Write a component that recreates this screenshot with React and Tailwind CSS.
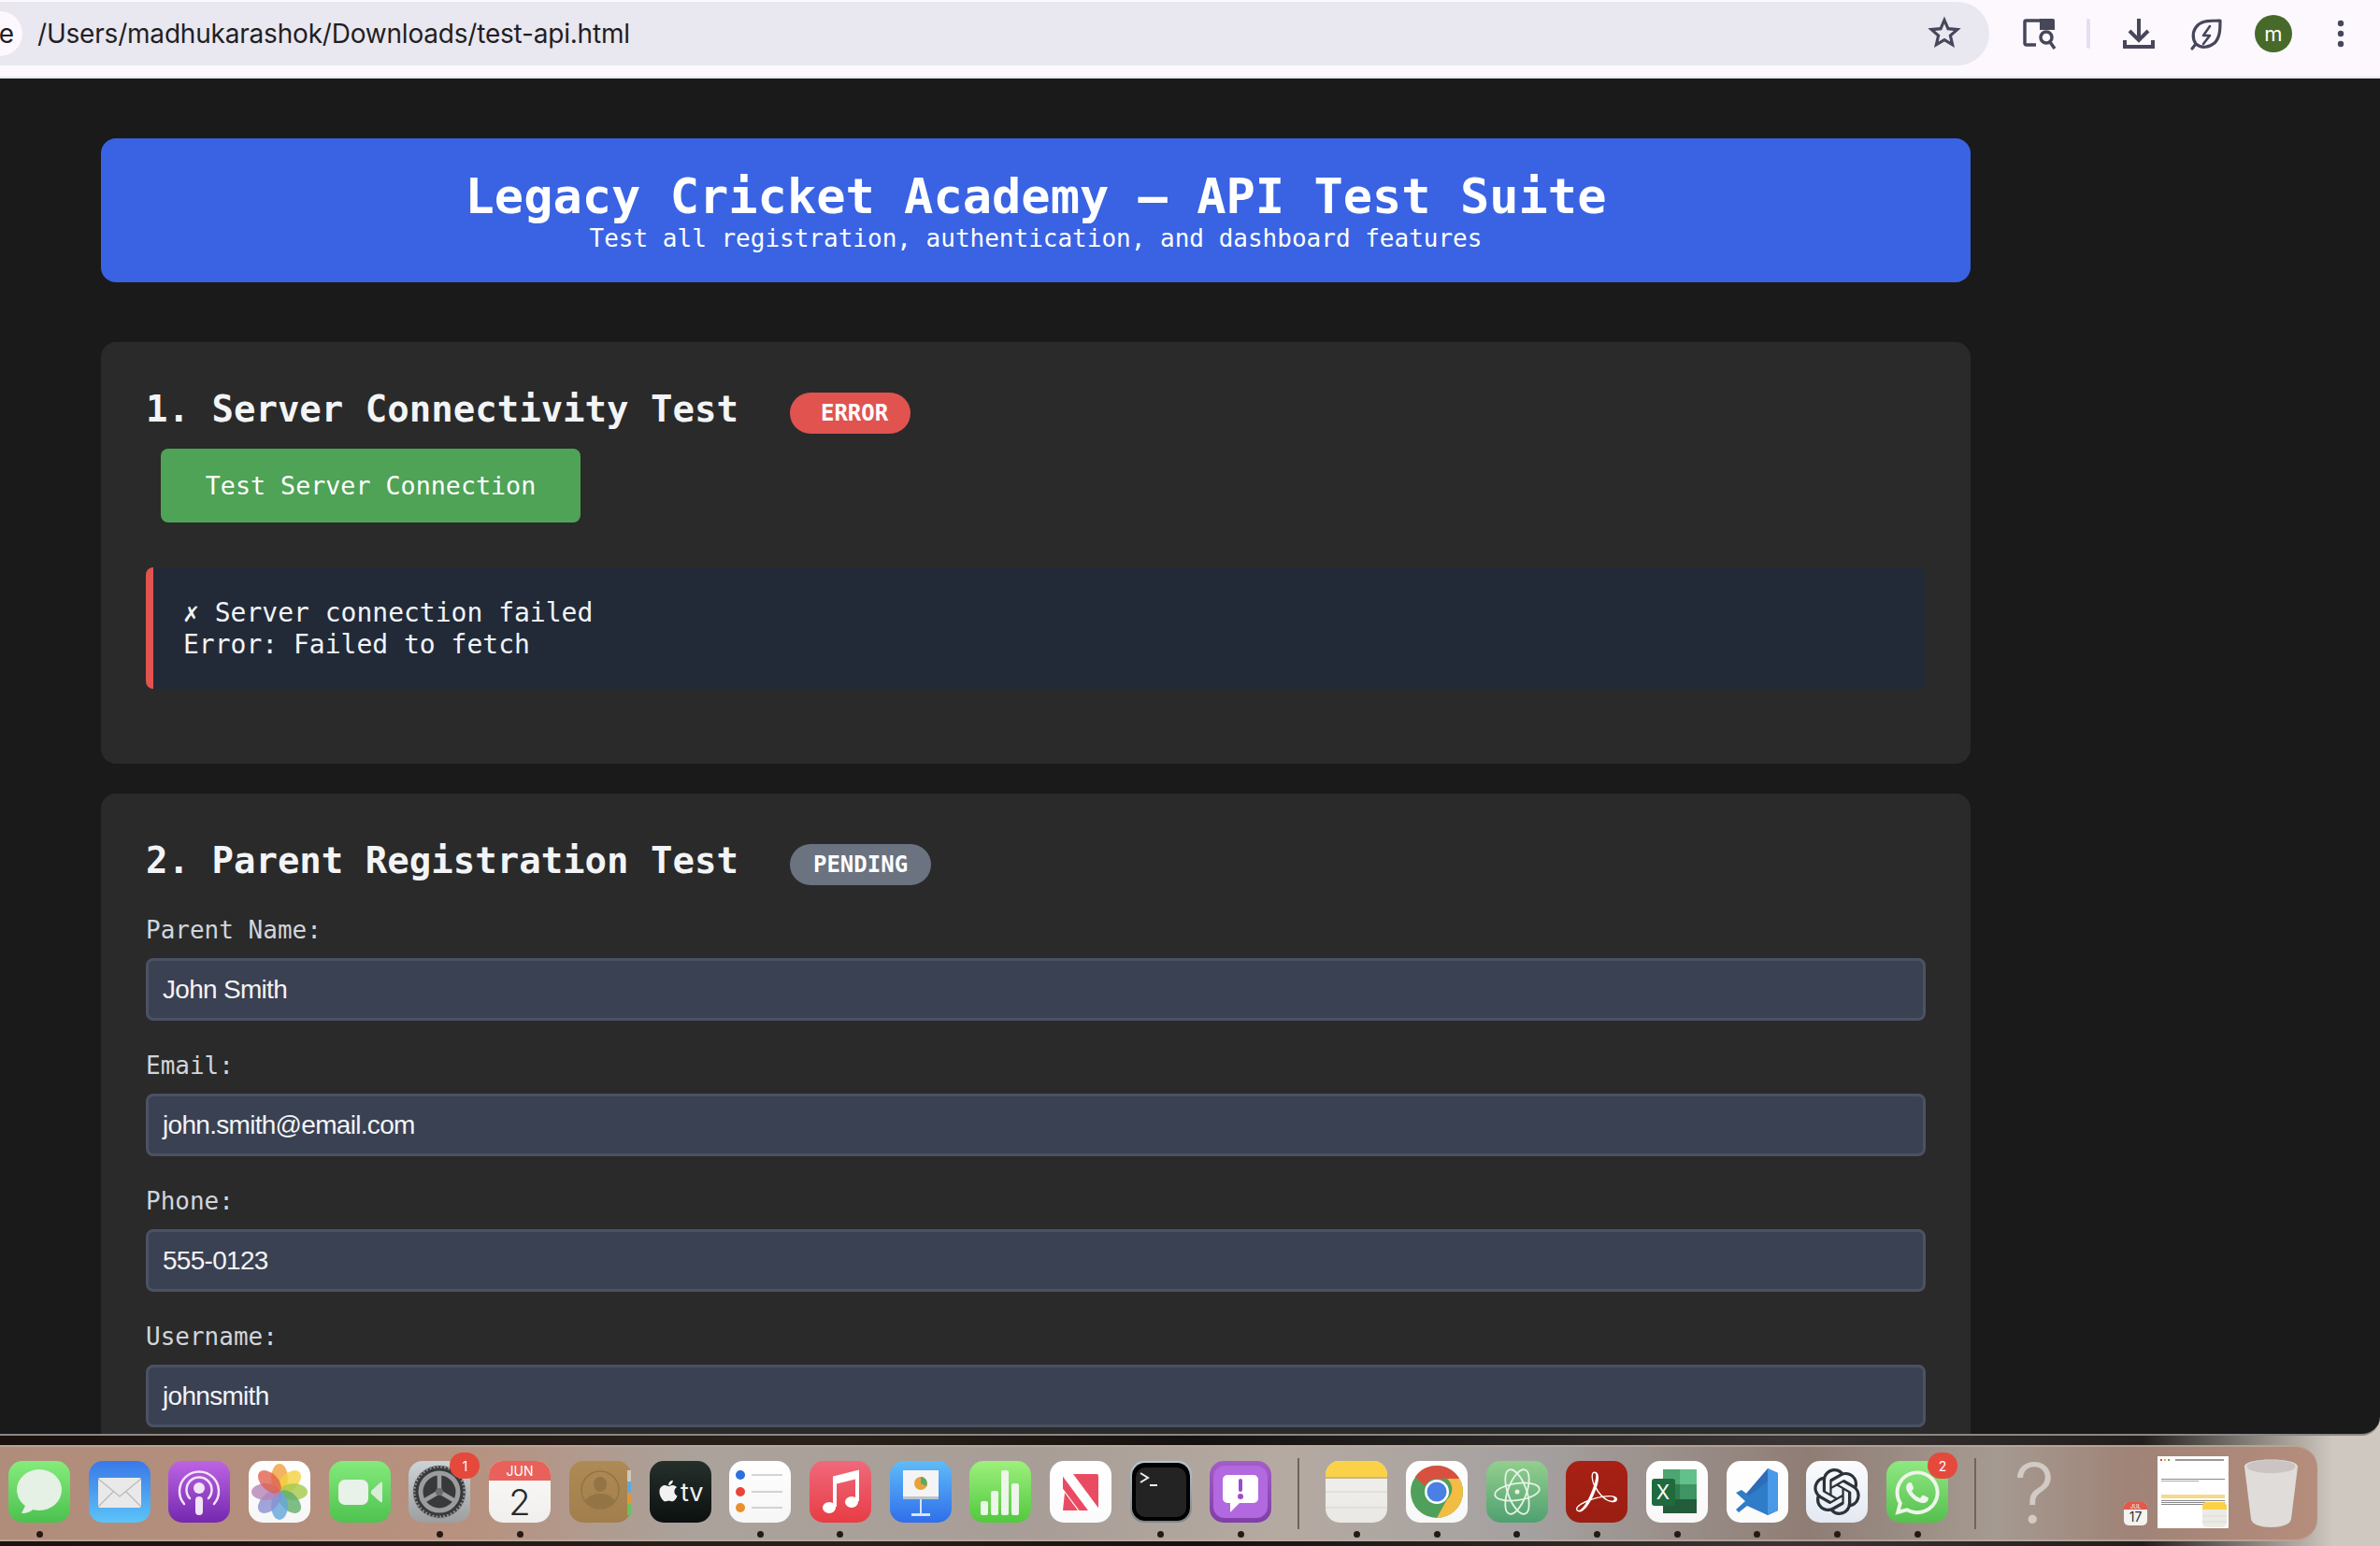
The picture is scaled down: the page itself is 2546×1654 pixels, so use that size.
import React from "react";
import { FaApple, FaWhatsapp } from "react-icons/fa";
import { SiOpenai, SiAdobeacrobatreader } from "react-icons/si";

const mono = "font-['DejaVu_Sans_Mono',monospace]";

function Badge({ label, color, pad }) {
  return (
    <span className={`mt-[6px] h-[44px] flex items-center rounded-full text-[24px] font-bold text-white ${color} ${pad}`}>
      {label}
    </span>
  );
}

function Field({ label, value }) {
  return (
    <div className="mb-[31px]">
      <label className="block h-[30px] leading-[34px] mb-[17px] text-[26px] text-[#d1d5db]">{label}</label>
      <div className="h-[67px] flex items-center px-[15px] rounded-[8px] border-[3px] border-[#4a5263] bg-[#3a4152] text-[28px] tracking-[-0.7px] text-[#f3f4f6] font-['Liberation_Sans',sans-serif]">
        {value}
      </div>
    </div>
  );
}

function ToolbarIcons() {
  const c = "#47475a";
  return (
    <div className="flex-1 relative h-[72px]">
      <svg className="absolute left-[36px] top-[18px]" width="36" height="34" viewBox="0 0 36 34" fill="none">
        <path d="M14 28H3.500a1.500 1.500 0 0 1-1.500-1.500V3.500A1.500 1.500 0 0 1 3.500 2H18" stroke={c} strokeWidth="3.500" />
        <path d="M18 0h14a2 2 0 0 1 2 2v10H18z" fill={c} />
        <circle cx="25" cy="20" r="6" stroke={c} strokeWidth="3.500" />
        <path d="M29 25l5 7" stroke={c} strokeWidth="3.500" />
      </svg>
      <div className="absolute left-[104px] top-[18px] w-[4px] h-[32px] rounded-full bg-[#e2dff5]" />
      <svg className="absolute left-[140px] top-[14px]" width="40" height="40" viewBox="0 0 40 40" fill="none" stroke={c} strokeWidth="4">
        <path d="M20 4v22M10 17l10 10 10-10" />
        <path d="M5 27v7h30v-7" />
      </svg>
      <svg className="absolute left-[212px] top-[14px]" width="40" height="40" viewBox="0 0 40 40" fill="none" stroke={c} strokeWidth="3.200" strokeLinejoin="round" strokeLinecap="round">
        <path d="M35 6c-10 0-19 0-24 5-6 6-6 14-2 20 6 5 14 4 20-1 6-6 6-15 6-24z" />
        <path d="M5 36l4-5" />
        <path d="M24 12l-7 10h7l-7 9" strokeWidth="2.600" />
      </svg>
      <div className="absolute left-[284px] top-[14px] w-[40px] h-[40px] rounded-full bg-[#476a2a] flex items-center justify-center text-[22px] text-white font-['Inter',sans-serif]">
        m
      </div>
      <svg className="absolute left-[356px] top-[14px]" width="40" height="40" viewBox="0 0 40 40" fill={c}>
        <circle cx="20" cy="9" r="3.200" />
        <circle cx="20" cy="20" r="3.200" />
        <circle cx="20" cy="31" r="3.200" />
      </svg>
    </div>
  );
}

const Tile = ({ id, from, to, children }) => (
  <svg width="66" height="66" viewBox="0 0 66 66">
    <defs>
      <linearGradient id={id} x1="0" y1="0" x2="0" y2="1">
        <stop offset="0" stopColor={from} />
        <stop offset="1" stopColor={to} />
      </linearGradient>
    </defs>
    <rect width="66" height="66" rx="15" fill={`url(#${id})`} />
    {children}
  </svg>
);

const petals = [
  ["#f0a03c", 0], ["#f3d23e", 45], ["#a5c94a", 90], ["#62ad6a", 135],
  ["#64a5dc", 180], ["#8a8fd0", 225], ["#b585b8", 270], ["#e0604e", 315],
];

const dockLeft = [
  { id: "messages", dot: true, el: (
    <Tile id="g1" from="#85ec7c" to="#4cc14e">
      <ellipse cx="33" cy="31" rx="24" ry="22" fill="#e4f1e4" />
      <path d="M18 48l-4 8c6 0 11-2 14-6z" fill="#e4f1e4" />
    </Tile>
  ) },
  { id: "mail", el: (
    <Tile id="g2" from="#3a78e8" to="#5cc3f8">
      <rect x="10" y="18" width="46" height="32" rx="2" fill="#e9e9e9" />
      <path d="M10 19l23 19 23-19M10 49l17-17M56 49L39 32" fill="none" stroke="#b9b9b9" strokeWidth="1.200" />
    </Tile>
  ) },
  { id: "podcasts", el: (
    <Tile id="g3" from="#bd64e4" to="#7428ae">
      <g fill="none" stroke="#f3e4fa" strokeWidth="2.500" strokeLinecap="round">
        <path d="M17 46a21 21 0 1 1 32 0" />
        <path d="M23 40a13.500 13.500 0 1 1 20 0" />
      </g>
      <circle cx="33" cy="29" r="6" fill="#f3e4fa" />
      <rect x="29" y="38" width="8" height="20" rx="4" fill="#f3e4fa" />
    </Tile>
  ) },
  { id: "photos", el: (
    <Tile id="g4" from="#ffffff" to="#f6f6f6">
      {petals.map(([color, angle]) => (
        <ellipse key={angle} cx="33" cy="18" rx="9" ry="15" fill={color} opacity="0.8" transform={`rotate(${angle} 33 33)`} />
      ))}
    </Tile>
  ) },
  { id: "facetime", el: (
    <Tile id="g5" from="#84ea7c" to="#4ec24f">
      <rect x="10" y="20" width="32" height="27" rx="7" fill="#e8f2e8" />
      <path d="M45 32l10-9c1-1 2 0 2 1v19c0 1-1 2-2 1l-10-9z" fill="#d9ebd9" />
    </Tile>
  ) },
  { id: "settings", dot: true, badge: "1", el: (
    <Tile id="g6" from="#ccd3d6" to="#9d9fa0">
      <circle cx="33" cy="33" r="28" fill="#37393b" />
      <circle cx="33" cy="33" r="27" fill="none" stroke="#8b8d8f" strokeWidth="3" strokeDasharray="2 2" />
      <circle cx="33" cy="33" r="20" fill="none" stroke="#9a9c9e" strokeWidth="5" />
      <path d="M33 33V14M33 33L16 43M33 33l17 10" stroke="#9a9c9e" strokeWidth="4.500" />
      <circle cx="33" cy="33" r="4" fill="#6a6c6e" />
    </Tile>
  ) },
  { id: "calendar", dot: true, el: (
    <Tile id="g7" from="#fafafa" to="#f0efed">
      <path d="M0 21V15A15 15 0 0 1 15 0h36a15 15 0 0 1 15 15v6z" fill="#e8615a" />
      <text x="33" y="16" textAnchor="middle" fontSize="14" fill="#fff" fontFamily="Inter, sans-serif">JUN</text>
      <text x="33" y="58" textAnchor="middle" fontSize="38" fill="#2a2a2a" fontFamily="Inter, sans-serif" fontWeight="300">2</text>
    </Tile>
  ) },
  { id: "contacts", el: (
    <Tile id="g8" from="#ae8a55" to="#a17e4c">
      <rect x="62" y="10" width="4" height="12" fill="#d0c8b8" />
      <rect x="62" y="22" width="4" height="12" fill="#5fa8dc" />
      <rect x="62" y="34" width="4" height="12" fill="#e0963a" />
      <rect x="62" y="46" width="4" height="12" fill="#6cc060" />
      <circle cx="33" cy="31" r="20" fill="none" stroke="#937445" strokeWidth="1.500" />
      <ellipse cx="33" cy="25" rx="7" ry="8" fill="#937445" />
      <path d="M17 44c3-7 9-9 16-9s13 2 16 9c-4 4-10 6-16 6s-12-2-16-6z" fill="#937445" />
    </Tile>
  ) },
  { id: "tv", el: (
    <Tile id="g9" from="#25302b" to="#0c1010">
      <FaApple x="7" y="19" size="26" color="#f2f2f2" />
      <text x="33" y="43" fontSize="27" fill="#f2f2f2" fontFamily="Inter, sans-serif">tv</text>
    </Tile>
  ) },
  { id: "reminders", dot: true, el: (
    <Tile id="g10" from="#ffffff" to="#f6f6f6">
      <circle cx="12" cy="15" r="5" fill="#2a70e0" />
      <circle cx="12" cy="33" r="5" fill="#e8453a" />
      <circle cx="12" cy="50" r="5" fill="#e8902c" />
      <path d="M24 15h33M24 33h33M24 50h33" stroke="#c6c6c6" strokeWidth="1.500" />
    </Tile>
  ) },
  { id: "music", dot: true, el: (
    <Tile id="g11" from="#f0697c" to="#e83c44">
      <path d="M27 49V18l24-6v31" fill="none" stroke="#fff" strokeWidth="4" />
      <path d="M27 18l24-6v7l-24 6z" fill="#fff" />
      <ellipse cx="21" cy="50" rx="7" ry="6" fill="#fff" />
      <ellipse cx="45" cy="44" rx="7" ry="6" fill="#fff" />
    </Tile>
  ) },
  { id: "keynote", el: (
    <Tile id="g12" from="#5fbcf8" to="#2f6eea">
      <rect x="14" y="10" width="38" height="30" fill="#f4f4f4" />
      <circle cx="33" cy="24" r="7" fill="#e9a23b" />
      <path d="M33 24V17a7 7 0 0 1 6 10z" fill="#5aa86a" />
      <rect x="14" y="38" width="38" height="3" fill="#b9c4d0" />
      <path d="M33 41v17" stroke="#dbe3ec" strokeWidth="2" />
      <rect x="23" y="56" width="20" height="3" fill="#dbe3ec" />
    </Tile>
  ) },
  { id: "numbers", el: (
    <Tile id="g13" from="#9df07c" to="#52c83f">
      <rect x="12" y="43" width="8" height="15" rx="2" fill="#eef5ea" />
      <rect x="23" y="32" width="8" height="26" rx="2" fill="#eef5ea" />
      <rect x="34" y="10" width="8" height="48" rx="2" fill="#eef5ea" />
      <rect x="45" y="24" width="8" height="34" rx="2" fill="#eef5ea" />
    </Tile>
  ) },
  { id: "news", el: (
    <Tile id="g14" from="#ffffff" to="#fbfbfb">
      <rect x="14" y="14" width="38" height="39" rx="2" fill="#e94c62" />
      <path d="M12 14h13l29 39H41z" fill="#fff" />
      <path d="M12 27l21 28H12z" fill="#fff" />
      <path d="M16 34L30 53H14z" fill="#e94c62" />
    </Tile>
  ) },
  { id: "terminal", dot: true, el: (
    <Tile id="g15" from="#b4c8d2" to="#7d8487">
      <rect x="2" y="2" width="62" height="62" rx="14" fill="#000" />
      <rect x="6" y="7" width="54" height="53" rx="10" fill="#232323" />
      <path d="M11 13l8 5-8 5" fill="none" stroke="#f0f0f0" strokeWidth="2" />
      <path d="M21 26h8" stroke="#f0f0f0" strokeWidth="2" />
    </Tile>
  ) },
  { id: "feedback", dot: true, el: (
    <Tile id="g16" from="#a55cc8" to="#7f3ea8">
      <rect x="4" y="5" width="58" height="56" rx="12" fill="#b268de" />
      <rect x="14" y="15" width="38" height="30" rx="5" fill="#fff" />
      <path d="M22 44v11l11-11z" fill="#fff" />
      <rect x="31" y="19" width="4" height="14" rx="2" fill="#9c4cc8" />
      <circle cx="33" cy="38" r="3" fill="#9c4cc8" />
    </Tile>
  ) },
];

const dockRight = [
  { id: "notes", dot: true, el: (
    <Tile id="g17" from="#f2f1ed" to="#e9e8e4">
      <path d="M0 18V15A15 15 0 0 1 15 0h36a15 15 0 0 1 15 15v3z" fill="#fbd247" />
      <rect y="17" width="66" height="2" fill="#c5b88a" />
      <path d="M0 33h66M0 50h66" stroke="#dcdbd7" strokeWidth="1.500" />
    </Tile>
  ) },
  { id: "chrome", dot: true, el: (
    <Tile id="g18" from="#ffffff" to="#f7f7f7">
      <circle cx="33" cy="33" r="28" fill="#4fa05a" />
      <path d="M33 5a28 28 0 0 1 24.200 14H33a14 14 0 0 0-13 8L10 17A28 28 0 0 1 33 5z" fill="#d85140" />
      <path d="M57.200 19A28 28 0 0 1 33 61l11-20a14 14 0 0 0 0-22z" fill="#f2bd42" />
      <circle cx="33" cy="33" r="13" fill="#fff" />
      <circle cx="33" cy="33" r="10.500" fill="#4a80e4" />
    </Tile>
  ) },
  { id: "atom", dot: true, el: (
    <Tile id="g19" from="#93cf8e" to="#4fa070">
      <g fill="none" stroke="#e4f4e4" strokeWidth="1.800">
        <ellipse cx="33" cy="33" rx="10" ry="25" transform="rotate(-20 33 33)" />
        <ellipse cx="33" cy="33" rx="10" ry="25" transform="rotate(20 33 33)" />
        <ellipse cx="33" cy="33" rx="24" ry="9" transform="rotate(-8 33 33)" />
      </g>
      <circle cx="33" cy="33" r="2.500" fill="#e4f4e4" />
    </Tile>
  ) },
  { id: "acrobat", dot: true, el: (
    <Tile id="g20" from="#a82114" to="#9a1e12">
      <SiAdobeacrobatreader x="11" y="11" size="44" color="#ffffff" />
    </Tile>
  ) },
  { id: "excel", dot: true, el: (
    <Tile id="g21" from="#ffffff" to="#f8f8f8">
      <rect x="18" y="9" width="18" height="16" fill="#4da571" />
      <rect x="36" y="9" width="18" height="16" fill="#62c08a" />
      <rect x="18" y="25" width="18" height="16" fill="#2e7c4e" />
      <rect x="36" y="25" width="18" height="16" fill="#3e9463" />
      <rect x="18" y="41" width="36" height="15" fill="#235c3a" />
      <rect x="6" y="19" width="25" height="29" rx="3" fill="#1f6b3d" />
      <text x="18" y="41" textAnchor="middle" fontSize="21" fill="#fff" fontFamily="Inter, sans-serif">X</text>
    </Tile>
  ) },
  { id: "vscode", dot: true, el: (
    <Tile id="g22" from="#ffffff" to="#fbfbfb">
      <path d="M44 8l11 5v40l-11 5-24-22z" fill="#2c6cb8" />
      <path d="M44 8l11 5v40l-11 5z" fill="#4a98e8" />
      <path d="M44 22L24 37l-8-6-6 3 10 9-10 9 3 3 9-7 22 10z" fill="#2f7cc8" />
    </Tile>
  ) },
  { id: "chatgpt", dot: true, el: (
    <Tile id="g23" from="#fbfcfe" to="#e3e8f2">
      <SiOpenai x="8" y="8" size="50" color="#2c323a" />
    </Tile>
  ) },
  { id: "whatsapp", dot: true, badge: "2", el: (
    <Tile id="g24" from="#8fe882" to="#55c04e">
      <FaWhatsapp x="6" y="7" size="54" color="#eef5ea" />
    </Tile>
  ) },
];

function DockItem({ item }) {
  return (
    <div className="relative w-[66px] shrink-0 flex flex-col items-center">
      {item.el}
      <div className={`mt-[9px] w-[7px] h-[7px] rounded-full ${item.dot ? "bg-[#241a14]" : "bg-transparent"}`} />
      {item.badge && (
        <span className="absolute -top-[9px] -right-[10px] w-[32px] h-[28px] rounded-full bg-[#e5493c] text-white text-[14px] flex items-center justify-center font-['Inter',sans-serif]">
          {item.badge}
        </span>
      )}
    </div>
  );
}

function Dock() {
  return (
    <div className="mt-[10px] w-[2479px] h-[103px] rounded-r-[24px] border-y-[2px] border-[#bcaea4]/70 bg-[linear-gradient(90deg,#b08c7b_0%,#b8917f_20%,#aaa29b_30%,#a89e97_45%,#b5aaa1_55%,#a5a1a1_66%,#8f7d74_78%,#a59a91_86%,#a08377_92%,#b68d7c_100%)] flex pl-[9px] pt-[15px]">
      <div className="flex gap-[19.7px]">
        {dockLeft.map((d) => <DockItem key={d.id} item={d} />)}
      </div>
      <div className="mx-[28px] mt-[-3px] w-[2px] h-[76px] bg-[#6f635b]" />
      <div className="flex gap-[19.7px]">
        {dockRight.map((d) => <DockItem key={d.id} item={d} />)}
      </div>
      <div className="mx-[28px] mt-[-3px] w-[2px] h-[76px] bg-[#6f635b]" />
      <span className="w-[40px] ml-[12px] mt-[-14px] text-[88px] leading-[96px] text-[#d2cac4] font-['Inter',sans-serif] font-light">?</span>
      <div className="ml-[78px] mt-[44px] w-[25px] h-[25px]">
        <svg width="25" height="25" viewBox="0 0 25 25">
          <rect width="25" height="25" rx="5" fill="#f4f3f0" />
          <path d="M0 8V5a5 5 0 0 1 5-5h15a5 5 0 0 1 5 5v3z" fill="#e0594f" />
          <text x="12.500" y="6.500" textAnchor="middle" fontSize="6" fill="#fff" fontFamily="Inter, sans-serif">JUL</text>
          <text x="12.500" y="21" textAnchor="middle" fontSize="14" fill="#333" fontFamily="Inter, sans-serif">17</text>
        </svg>
      </div>
      <div className="relative ml-[11px] mt-[-5px] w-[76px] h-[77px] bg-white">
        <div className="flex gap-[2px] p-[3px]">
          <span className="w-[2px] h-[2px] bg-[#e0443a]" />
          <span className="w-[2px] h-[2px] bg-[#e8b43a]" />
          <span className="w-[2px] h-[2px] bg-[#5aa84a]" />
          <span className="ml-[4px] w-[52px] h-[2px] bg-[#999]" />
        </div>
        <div className="mx-[4px] mt-[16px] h-[1px] bg-[#888]" />
        <div className="mx-[4px] mt-[1px] w-[40px] h-[1px] bg-[#aaa]" />
        <div className="mx-[4px] mt-[14px] h-[4px] bg-[#f6d98a]" />
        <div className="mx-[4px] mt-[2px] h-[1px] bg-[#888]" />
        <div className="mx-[4px] mt-[1px] h-[1px] bg-[#888]" />
        <div className="mx-[4px] mt-[1px] w-[50px] h-[1px] bg-[#888]" />
        <div className="absolute right-[2px] bottom-[1px]">
          <svg width="26" height="27" viewBox="0 0 26 27">
            <rect width="26" height="27" rx="5" fill="#eceae4" />
            <path d="M0 8V5a5 5 0 0 1 5-5h16a5 5 0 0 1 5 5v3z" fill="#fbd247" />
            <path d="M0 15h26M0 21h26" stroke="#dcdbd7" />
          </svg>
        </div>
      </div>
      <div className="ml-[17px] mt-[-2px]">
        <svg width="57" height="73" viewBox="0 0 57 73">
          <path d="M0 8c0-10 57-10 57 0l-7 56c-1 12-42 12-43 0z" fill="#dfdcd9" />
          <ellipse cx="28.500" cy="8" rx="26" ry="7" fill="#cbc4c2" />
        </svg>
      </div>
    </div>
  );
}

export default function App() {
  return (
    <div className="w-[2546px] h-[1654px] overflow-hidden bg-[linear-gradient(90deg,#1c120d_0%,#2a211c_35%,#15110e_50%,#3a3532_75%,#221e1b_90%,#cfc8c0_98%)]">
      <div className={`h-[1536px] flex flex-col overflow-hidden rounded-br-[20px] border-b-[2px] border-[#8a8885] bg-[#1a1a1a] ${mono}`}>
        {/* browser toolbar */}
        <div className="shrink-0 h-[84px] flex bg-[#fdf8fe] border-b-[2px] border-[#e8e6ef] pt-[2px]">
          <div className="w-[2128px] h-[68px] rounded-r-full bg-[#e9e7f0] flex items-center relative">
            <div className="absolute left-0 top-[10px] w-[24px] h-[48px] rounded-r-full bg-[#fdf8fe] overflow-hidden flex items-center justify-end pr-[9px] text-[28px] text-[#1f1f24] font-['Inter',sans-serif]">
              e
            </div>
            <span className="ml-[40px] text-[28px] tracking-[-0.2px] text-[#1f1f24] font-['Inter',sans-serif]">
              /Users/madhukarashok/Downloads/test-api.html
            </span>
            <svg className="absolute right-[30px] top-[15px]" width="36" height="36" viewBox="0 0 40 40" fill="none" stroke="#47475a" strokeWidth="3.500">
              <path d="M20 5l4.400 10.200 11 1-8.300 7.200 2.500 10.800L20 28.500l-9.600 5.700 2.500-10.800-8.300-7.200 11-1z" />
            </svg>
          </div>
          <ToolbarIcons />
        </div>

        <div className="w-[2000px] ml-[108px] pt-[64px]">
          <header className="h-[154px] rounded-[16px] bg-[#3963e3] text-white text-center pt-[32px]">
            <h1 className="text-[52px] leading-[60px] font-bold">Legacy Cricket Academy – API Test Suite</h1>
            <p className="text-[26px] leading-[30px]">Test all registration, authentication, and dashboard features</p>
          </header>

          <section className="mt-[64px] h-[451px] rounded-[16px] bg-[#2a2a2a] p-[48px]">
            <div className="flex items-start gap-[55px] h-[50px]">
              <h2 className="text-[39px] leading-[47px] font-bold text-[#f3f4f6]">1. Server Connectivity Test</h2>
              <Badge label="ERROR" color="bg-[#e0534f]" pad="pl-[33px] pr-[24px]" />
            </div>
            <button className="mt-[16px] ml-[16px] w-[449px] h-[79px] pt-[2px] rounded-[8px] bg-[#4fa357] text-white text-[26.7px]">
              Test Server Connection
            </button>
            <div className="mt-[48px] h-[130px] rounded-[8px] border-l-[8px] border-[#e0534f] bg-[#222a38] pl-[32px] pt-[32px] text-[28px] leading-[34px] text-[#f3f4f6]">
              <div>✗ Server connection failed</div>
              <div>Error: Failed to fetch</div>
            </div>
          </section>

          <section className="mt-[32px] rounded-[16px] bg-[#2a2a2a] p-[48px]">
            <div className="flex items-start gap-[55px] h-[50px] mb-[31px]">
              <h2 className="text-[39px] leading-[47px] font-bold text-[#f3f4f6]">2. Parent Registration Test</h2>
              <Badge label="PENDING" color="bg-[#6b7280]" pad="px-[25px]" />
            </div>
            <Field label="Parent Name:" value="John Smith" />
            <Field label="Email:" value="john.smith@email.com" />
            <Field label="Phone:" value="555-0123" />
            <Field label="Username:" value="johnsmith" />
          </section>
        </div>
      </div>
      <Dock />
    </div>
  );
}
